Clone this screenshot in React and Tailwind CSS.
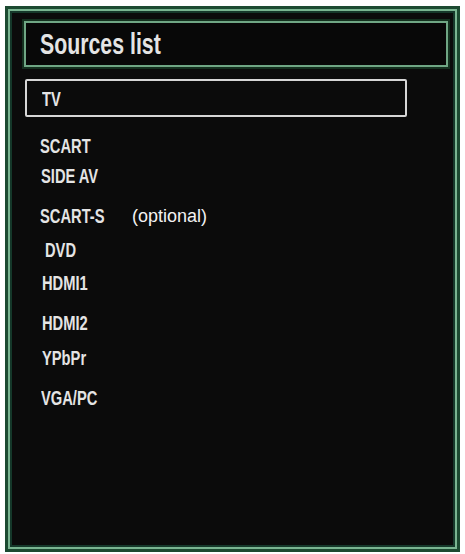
const items = [
  { label: "SCART", mt: "mt-[18px]", ml: "ml-[16px]" },
  { label: "SIDE AV", mt: "mt-[9px]", ml: "ml-[17px]" },
  { label: "SCART-S", mt: "mt-[19px]", ml: "ml-[16px]", note: "(optional)" },
  { label: "DVD", mt: "mt-[13px]", ml: "ml-[21px]" },
  { label: "HDMI1", mt: "mt-[12px]", ml: "ml-[18px]" },
  { label: "HDMI2", mt: "mt-[19px]", ml: "ml-[18px]" },
  { label: "YPbPr", mt: "mt-[14px]", ml: "ml-[18px]" },
  { label: "VGA/PC", mt: "mt-[19px]", ml: "ml-[17px]" },
];

export default function App() {
  return (
    <div className="w-[465px] h-[554px] bg-white pt-[6px] pl-[5px]">
      {/* outer green frame */}
      <div className="w-[455px] h-[546px] bg-[#1c4a31] p-[3px]">
        <div className="h-full border-2 border-[#7ab591]">
          <div className="h-full bg-[#0b0b0b] border-2 border-[#15382a] pt-[8px] pl-[12px] font-['Liberation_Sans',sans-serif] text-[#e4e4e4]">
            {/* title */}
            <div className="w-[424px] h-[46px] border-2 border-[#6fa684] ring-2 ring-[#14301f] bg-[#080808] flex items-center pl-[14px]">
              <span className="text-[30px] leading-none font-bold scale-x-[0.71] origin-left whitespace-nowrap">
                Sources list
              </span>
            </div>

            {/* selected row */}
            <div className="mt-[12px] ml-[1px] w-[382px] h-[38px] border-2 border-[#d6d6d6] rounded-[2px] flex items-center pl-[15px]">
              <span className="text-[21px] leading-none font-bold scale-x-[0.7] origin-left">
                TV
              </span>
            </div>

            {/* source list */}
            <div className="flex flex-col">
              {items.map((it) => (
                <div key={it.label} className={`${it.mt} ${it.ml} h-[21px] flex items-center relative`}>
                  <span className="text-[21px] leading-none font-bold scale-x-[0.7] origin-left whitespace-nowrap">
                    {it.label}
                  </span>
                  {it.note && (
                    <span className="absolute left-[92px] top-[2px] text-[18px] leading-none font-normal text-[#f2f2f2]">
                      {it.note}
                    </span>
                  )}
                </div>
              ))}
            </div>
          </div>
        </div>
      </div>
    </div>
  );
}
